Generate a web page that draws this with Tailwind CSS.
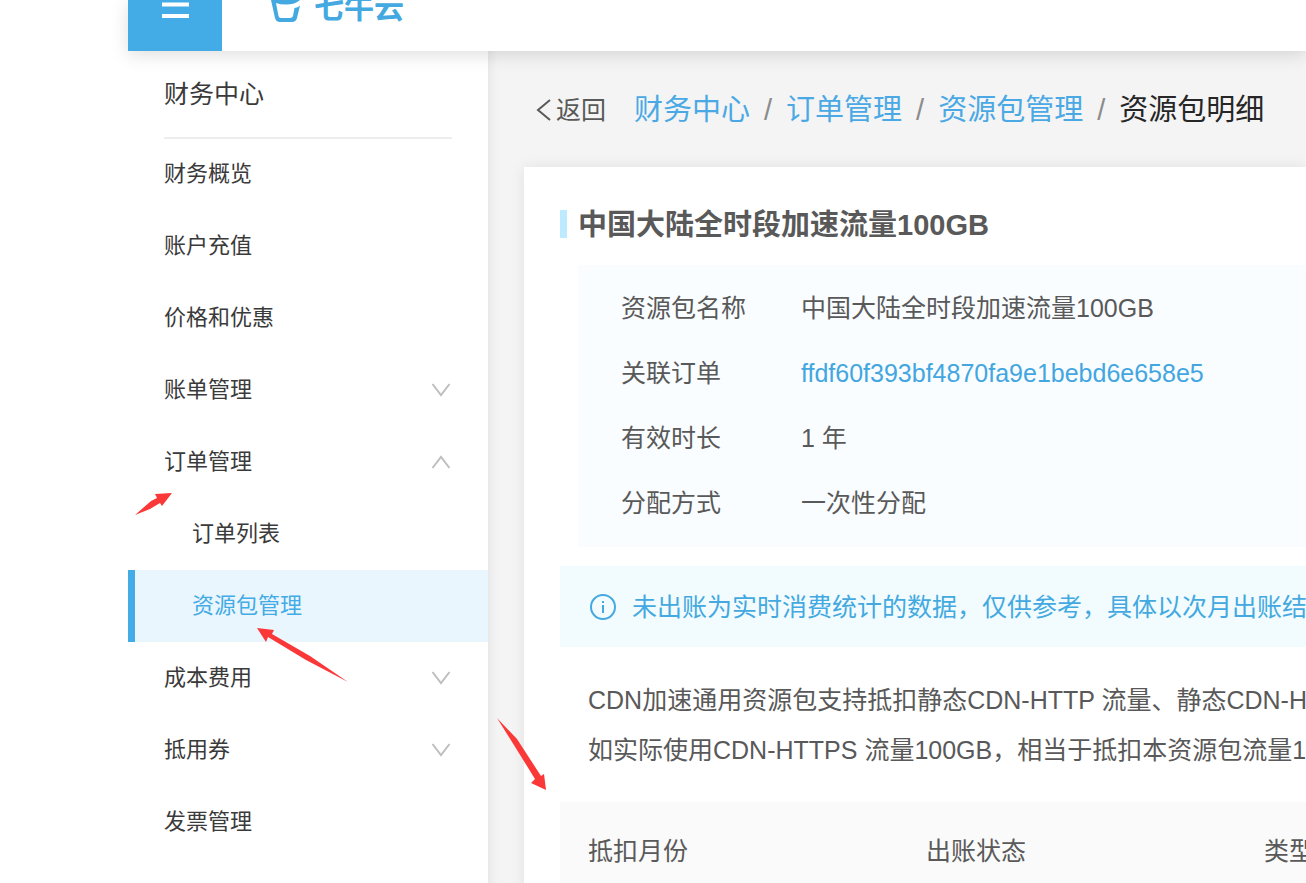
<!DOCTYPE html>
<html lang="zh-CN">
<head>
<meta charset="utf-8">
<meta name="viewport" content="width=device-width, initial-scale=1">
<title>资源包明细</title>
<script src="https://cdn.jsdelivr.net/npm/@tailwindcss/browser@4"></script>
</head>
<body class="relative flex h-screen flex-col overflow-hidden bg-white pl-32 font-['Liberation_Sans','Noto_Sans_CJK_SC',sans-serif] text-[25px] text-[#595959]">
  <header class="relative z-10 flex h-[51px] shrink-0 items-end bg-white shadow-[0_4px_18px_rgba(0,0,0,0.13)]">
    <button type="button" aria-label="菜单" class="flex h-[51px] w-[94px] items-start justify-center bg-[#43abe6]">
      <svg class="h-5 w-7" viewBox="0 0 28 20" fill="none" stroke="#fff" stroke-width="4" aria-hidden="true"><path d="M1 4.500h27M1 16h27"/></svg>
    </button>
    <a href="#" class="ml-12 flex h-[51px] items-start text-[#43a9e0]">
      <svg class="h-6 w-8" viewBox="0 0 32 24" fill="none" aria-hidden="true">
        <path d="M1 0H30Q25 4.500 16 4.500Q10 4.500 6 3L8.500 16Q8.800 18 11 18H20Q22.500 18 23 16L24.500 8Q28 7.500 30 5.500L27 18Q26 22 22 22H10Q6 22 5 18Z" fill="currentColor"/>
      </svg>
      <span class="-mt-[7px] ml-3 text-[30px] leading-[30px] font-bold">七牛云</span>
    </a>
  </header>

  <div class="flex min-h-0 flex-1">
    <nav aria-label="财务中心" class="w-[360px] shrink-0 bg-white text-[22px] text-[#3a3a3a]">
      <h2 class="mx-9 flex h-22 items-center border-b-2 border-[#ededed] pt-0.5 text-[25px]">财务中心</h2>
      <ul class="-mt-px leading-[72px]">
        <li><a href="#" class="block px-9">财务概览</a></li>
        <li><a href="#" class="block px-9">账户充值</a></li>
        <li><a href="#" class="block px-9">价格和优惠</a></li>
        <li><button type="button" class="flex w-full items-center justify-between px-9">账单管理
          <svg class="mr-[1px] h-5 w-5" viewBox="0 0 20 20" fill="none" stroke="#bfbfbf" stroke-width="2" aria-hidden="true"><path d="M1.500 4L10 15L18.500 4"/></svg></button></li>
        <li><button type="button" class="flex w-full items-center justify-between px-9" aria-expanded="true">订单管理
          <svg class="mr-[1px] h-5 w-5" viewBox="0 0 20 20" fill="none" stroke="#bfbfbf" stroke-width="2" aria-hidden="true"><path d="M1.500 16L10 5L18.500 16"/></svg></button>
          <ul>
            <li><a href="#" class="block px-16">订单列表</a></li>
            <li><a href="#" aria-current="page" class="block border-l-7 border-[#43abe6] bg-[#eaf6fd] pr-9 pl-[57px] text-[#43abe6]">资源包管理</a></li>
          </ul></li>
        <li><button type="button" class="flex w-full items-center justify-between px-9">成本费用
          <svg class="mr-[1px] h-5 w-5" viewBox="0 0 20 20" fill="none" stroke="#bfbfbf" stroke-width="2" aria-hidden="true"><path d="M1.500 4L10 15L18.500 4"/></svg></button></li>
        <li><button type="button" class="flex w-full items-center justify-between px-9">抵用券
          <svg class="mr-[1px] h-5 w-5" viewBox="0 0 20 20" fill="none" stroke="#bfbfbf" stroke-width="2" aria-hidden="true"><path d="M1.500 4L10 15L18.500 4"/></svg></button></li>
        <li><a href="#" class="block px-9">发票管理</a></li>
      </ul>
    </nav>

    <main class="min-w-0 flex-1 overflow-hidden bg-[#f4f4f4] pl-9 whitespace-nowrap shadow-[inset_8px_0_10px_-6px_rgba(0,0,0,0.07)]">
      <div class="flex h-29 items-center pt-1 pl-3">
        <button type="button" class="flex items-center gap-1">
          <svg class="h-6 w-4" viewBox="0 0 16 24" fill="none" stroke="#595959" stroke-width="2" aria-hidden="true"><path d="M14 1L2 11L14 21"/></svg>返回</button>
        <ol class="ml-7 flex items-center gap-3.5 text-[29px]">
          <li><a href="#" class="text-[#4aa9e4]">财务中心</a></li>
          <li class="text-[#8c8c8c]" aria-hidden="true">/</li>
          <li><a href="#" class="text-[#4aa9e4]">订单管理</a></li>
          <li class="text-[#8c8c8c]" aria-hidden="true">/</li>
          <li><a href="#" class="text-[#4aa9e4]">资源包管理</a></li>
          <li class="text-[#8c8c8c]" aria-hidden="true">/</li>
          <li class="text-[#262626]" aria-current="page">资源包明细</li>
        </ol>
      </div>

      <section class="h-full bg-white pt-[43px] pl-9 shadow-[0_0_14px_rgba(0,0,0,0.08)]">
        <h1 class="flex h-7 items-center border-l-7 border-[#bdeaff] pt-1 pl-[11px] text-[29px] font-bold">中国大陆全时段加速流量100GB</h1>
        <dl class="mt-[27px] ml-[18px] grid grid-cols-[180px_1fr] bg-[#f9fdff] pt-[11px] pb-[11px] pl-[43px] leading-[65px]">
          <dt>资源包名称</dt><dd>中国大陆全时段加速流量100GB</dd>
          <dt>关联订单</dt><dd><a href="#" class="text-[#43a6e0]">ffdf60f393bf4870fa9e1bebd6e658e5</a></dd>
          <dt>有效时长</dt><dd>1 年</dd>
          <dt>分配方式</dt><dd>一次性分配</dd>
        </dl>
        <div role="status" class="mt-[19px] flex h-[81px] items-center gap-4 bg-[#f2fcff] pl-[30px] text-[#43a9e0]">
          <svg class="h-[26px] w-[26px] shrink-0" viewBox="0 0 26 26" fill="none" stroke="currentColor" stroke-width="2" aria-hidden="true"><circle cx="13" cy="13" r="12"/><path d="M13 11V19M13 7V9"/></svg>
          <span class="pt-0.5">未出账为实时消费统计的数据，仅供参考，具体以次月出账结</span>
        </div>
        <p class="mt-7 pl-7 leading-[50px]">CDN加速通用资源包支持抵扣静态CDN-HTTP 流量、静态CDN-H<br>如实际使用CDN-HTTPS 流量100GB，相当于抵扣本资源包流量1</p>
        <table class="mt-[27px] w-max table-fixed bg-[#fafafa] text-left">
          <thead><tr class="h-[100px]">
            <th scope="col" class="w-[338px] min-w-[338px] px-7 font-normal">抵扣月份</th>
            <th scope="col" class="w-[338px] min-w-[338px] px-7 font-normal">出账状态</th>
            <th scope="col" class="w-[338px] min-w-[338px] px-7 font-normal">类型</th>
          </tr></thead>
        </table>
      </section>
    </main>
  </div>

  <!-- Red annotation arrows drawn over the page -->
  <svg class="pointer-events-none absolute top-0 left-0 z-20 h-[883px] w-[1306px]" viewBox="0 0 1306 883" fill="#fb3838" aria-hidden="true">
    <path d="M135 515L151 501L157 498L155 494L172 493L162 506L160 503L150 509Z"/>
    <path d="M257 628L274 630L272 634L310 656L348 682L306 660L268 637L266 642Z"/>
    <path d="M497 718L517 739L541 776L544 774L546 790L531 783L535 779L522 758Z"/>
  </svg>
</body>
</html>
